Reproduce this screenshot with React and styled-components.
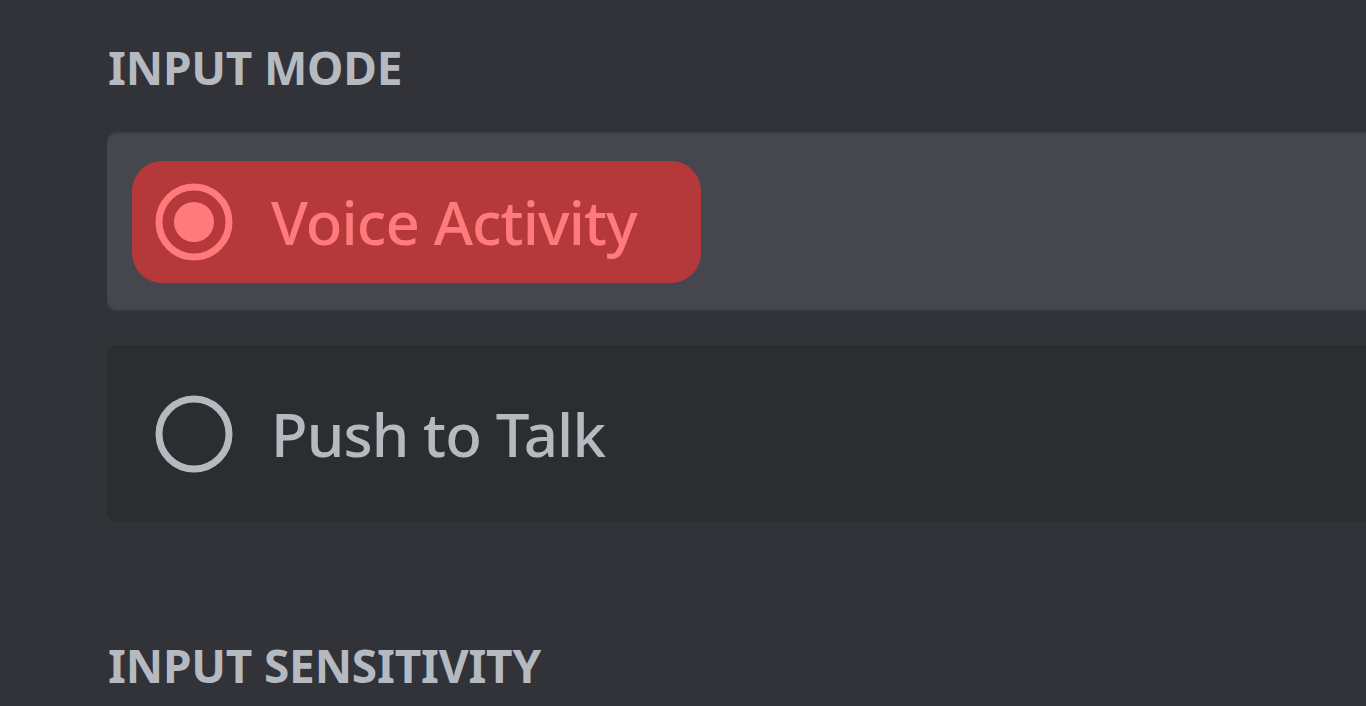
import React from "react";
import styled, { createGlobalStyle } from "styled-components";

const Global = createGlobalStyle`
  html, body {
    margin: 0;
    padding: 0;
    background: #313338;
    overflow: hidden;
  }
`;

const Page = styled.div`
  width: 1366px;
  height: 706px;
  box-sizing: border-box;
  padding: 43px 0 0 107px;
  background: #313338;
  font-family: "Noto Sans", "Open Sans", sans-serif;
  overflow: hidden;
`;

const Heading = styled.h2`
  margin: 0 0 ${(p) => p.gap || 0}px 1px;
  font-size: 46px;
  line-height: 48px;
  font-weight: 700;
  letter-spacing: -0.2px;
  color: #b5bac1;
  text-transform: uppercase;
`;

const Options = styled.div`
  display: flex;
  flex-direction: column;
  gap: 34px;
  margin-bottom: 119px;
`;

const Row = styled.div`
  display: flex;
  align-items: center;
  height: ${(p) => p.h}px;
  padding-left: 25px;
  border-radius: 10px 0 0 10px;
  background: ${(p) => (p.selected ? "#45464e" : "#2b2d31")};
  box-shadow: ${(p) =>
    p.selected ? "inset 0 2px 0 #3d3e46, inset 0 -2px 0 #3d3e46" : "none"};
`;

const Label = styled.div`
  display: inline-flex;
  align-items: center;
  gap: 38px;
  height: 122px;
  padding: 0 64px 0 23px;
  border-radius: 30px;
  background: ${(p) => (p.selected ? "#b5383b" : "transparent")};
  color: ${(p) => (p.selected ? "#ff7b7b" : "#b5bac1")};
  font-size: 60px;
  font-weight: 500;
  line-height: 1;
  letter-spacing: -0.9px;
`;

const Radio = ({ selected }) => {
  const c = selected ? "#ff7b7b" : "#b5bac1";
  return (
    <svg width="78" height="78" viewBox="0 0 78 78">
      <circle cx="39" cy="39" r="35" fill="none" stroke={c} strokeWidth="7" />
      {selected && <circle cx="39" cy="39" r="20" fill={c} />}
    </svg>
  );
};

const Option = ({ label, selected, h }) => (
  <Row selected={selected} h={h}>
    <Label selected={selected}>
      <Radio selected={selected} />
      <span>{label}</span>
    </Label>
  </Row>
);

export default function App() {
  return (
    <Page>
      <Global />
      <Heading gap={41}>Input Mode</Heading>
      <Options>
        <Option label="Voice Activity" selected h={179} />
        <Option label="Push to Talk" h={177} />
      </Options>
      <Heading>Input Sensitivity</Heading>
    </Page>
  );
}
